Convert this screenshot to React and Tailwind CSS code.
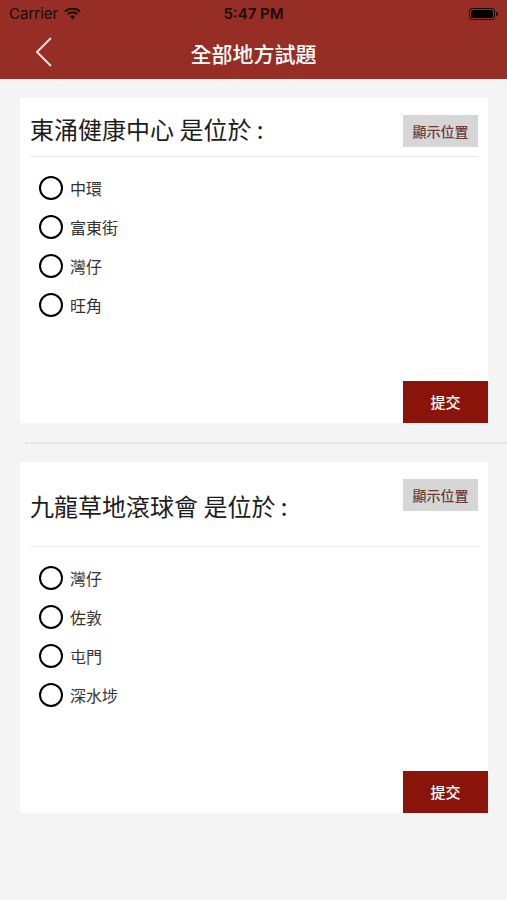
import React from 'react';

const questions = [
    {
        title: '東涌健康中心 是位於 :',
        options: ['中環', '富東街', '灣仔', '旺角'],
        headerH: 'h-[58px]',
        titleMt: 'mt-[16px]',
    },
    {
        title: '九龍草地滾球會 是位於 :',
        options: ['灣仔', '佐敦', '屯門', '深水埗'],
        headerH: 'h-[84px]',
        titleMt: 'mt-[29px]',
    },
];

const font = { fontFamily: '"Noto Sans CJK TC", "Noto Sans", sans-serif' };

const StatusBar = () => (
    <div className="h-[28px] flex items-center justify-between px-[9px] text-[#1a0a08] relative">
        <div className="flex items-center gap-[6px] text-[15px]" style={{ fontFamily: 'Inter, sans-serif' }}>
            <span>Carrier</span>
            <svg width="17" height="12" viewBox="0 0 17 12">
                <path d="M8.5 11.5 L6 8.6 A3.6 3.6 0 0 1 11 8.6 Z" fill="#1a0a08" />
                <path d="M3.6 6.3 A7 7 0 0 1 13.4 6.3" stroke="#1a0a08" strokeWidth="2" fill="none" />
                <path d="M1 3.6 A10.8 10.8 0 0 1 16 3.6" stroke="#1a0a08" strokeWidth="2" fill="none" />
            </svg>
        </div>
        <span className="absolute left-1/2 -translate-x-1/2 text-[15px] font-semibold" style={{ fontFamily: 'Inter, sans-serif' }}>5:47 PM</span>
        <div className="flex items-center">
            <div className="w-[26px] h-[12px] rounded-[3px] border border-[#1a0a08] p-[1px]">
                <div className="w-full h-full bg-black rounded-[2px]" />
            </div>
            <div className="w-[2px] h-[4px] bg-[#1a0a08] rounded-r-sm ml-[1px]" />
        </div>
    </div>
);

const NavBar = () => (
    <div className="h-[51px] flex items-center relative">
        <svg className="absolute left-[34px] top-[8px]" width="20" height="32" viewBox="0 0 20 32">
            <path d="M17 2 L3 16 L17 30" stroke="#f3dcd8" strokeWidth="2" fill="none" />
        </svg>
        <h1 className="w-full text-center text-white text-[21px] font-medium" style={font}>全部地方試題</h1>
    </div>
);

const QuestionCard = ({ q }) => (
    <div className="bg-white ml-[20px] mr-[19px]" style={font}>
        <div className="px-[10px]">
            <div className={`${q.headerH} flex justify-between items-start`}>
                <h2 className={`${q.titleMt} text-[24px] leading-[30px] text-[#1c1c1c]`}>{q.title}</h2>
                <button className="mt-[17px] w-[75px] h-[32px] bg-[#d6d6d6] text-[#6e3b3b] text-[14px] font-medium">
                    顯示位置
                </button>
            </div>
            <div className="h-px bg-[#e8e8e8]" />
            <div className="pt-[11px] pl-[9px]">
                {q.options.map(opt => (
                    <label key={opt} className="h-[39px] flex items-center gap-[7px]">
                        <span className="w-[24px] h-[24px] rounded-full border-[2.5px] border-black" />
                        <span className="text-[16px] text-[#333]">{opt}</span>
                    </label>
                ))}
            </div>
        </div>
        <div className="flex justify-end mt-[57px]">
            <button className="w-[85px] h-[42px] bg-[#8a1409] text-white text-[15px] font-medium">提交</button>
        </div>
    </div>
);

const App = () => {
    return (
        <div className="w-[507px] min-h-[900px] bg-[#f4f4f4]">
            <div className="bg-[#962e26]">
                <StatusBar />
                <NavBar />
            </div>
            <div className="pt-[19px]">
                <QuestionCard q={questions[0]} />
                <div className="ml-[25px] mt-[19px] mb-[18px] h-[2px] bg-[#e8e8e8]" />
                <QuestionCard q={questions[1]} />
            </div>
        </div>
    );
};

export default App;
